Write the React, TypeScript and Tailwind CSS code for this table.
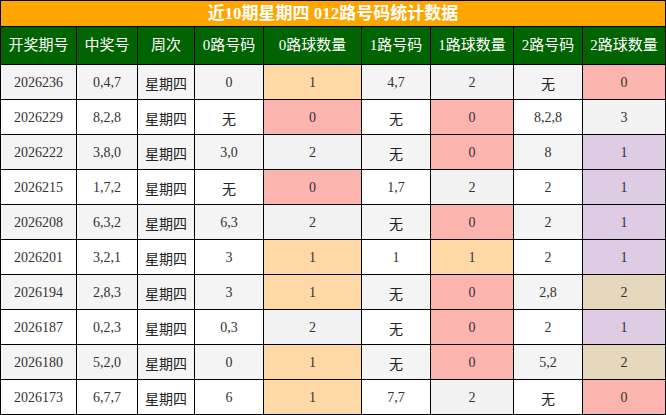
import React from "react";

type Cell = { t: string; c?: string };

const P = "bg-[#fbb4ae]";
const O = "bg-[#fed9a6]";
const G = "bg-[#f2f2f2]";
const L = "bg-[#decbe4]";
const T = "bg-[#e5d8bd]";

const rows: { id: string; win: string; z: string; zc: string; zcBg: string; o: string; oc: string; ocBg: string; t: string; tc: string; tcBg: string }[] = [
  { id: "2026236", win: "0,4,7", z: "0", zc: "1", zcBg: O, o: "4,7", oc: "2", ocBg: G, t: "无", tc: "0", tcBg: P },
  { id: "2026229", win: "8,2,8", z: "无", zc: "0", zcBg: P, o: "无", oc: "0", ocBg: P, t: "8,2,8", tc: "3", tcBg: G },
  { id: "2026222", win: "3,8,0", z: "3,0", zc: "2", zcBg: G, o: "无", oc: "0", ocBg: P, t: "8", tc: "1", tcBg: L },
  { id: "2026215", win: "1,7,2", z: "无", zc: "0", zcBg: P, o: "1,7", oc: "2", ocBg: G, t: "2", tc: "1", tcBg: L },
  { id: "2026208", win: "6,3,2", z: "6,3", zc: "2", zcBg: G, o: "无", oc: "0", ocBg: P, t: "2", tc: "1", tcBg: L },
  { id: "2026201", win: "3,2,1", z: "3", zc: "1", zcBg: O, o: "1", oc: "1", ocBg: O, t: "2", tc: "1", tcBg: L },
  { id: "2026194", win: "2,8,3", z: "3", zc: "1", zcBg: O, o: "无", oc: "0", ocBg: P, t: "2,8", tc: "2", tcBg: T },
  { id: "2026187", win: "0,2,3", z: "0,3", zc: "2", zcBg: G, o: "无", oc: "0", ocBg: P, t: "2", tc: "1", tcBg: L },
  { id: "2026180", win: "5,2,0", z: "0", zc: "1", zcBg: O, o: "无", oc: "0", ocBg: P, t: "5,2", tc: "2", tcBg: T },
  { id: "2026173", win: "6,7,7", z: "6", zc: "1", zcBg: O, o: "7,7", oc: "2", ocBg: G, t: "无", tc: "0", tcBg: P },
];

const headers = ["开奖期号", "中奖号", "周次", "0路号码", "0路球数量", "1路号码", "1路球数量", "2路号码", "2路球数量"];

const isCjk = (s: string) => /[\u4e00-\u9fff]/.test(s);

export default function App() {
  return (
    <div
      className="w-[666px] h-[415px] bg-black p-px grid gap-px grid-cols-[75px_60px_56px_68px_97px_68px_82px_68px_82px] grid-rows-[25px_37px_repeat(10,34px)]"
      style={{ fontFamily: '"Liberation Serif", "Noto Sans CJK SC", serif' }}
    >
      <div className="col-span-9 bg-[#ffa500] text-white font-bold text-[17px] flex items-center justify-center leading-none">
        近10期星期四 012路号码统计数据
      </div>
      {headers.map((h) => (
        <div key={h} className="bg-[#006400] text-white text-[15px] flex items-center justify-center">
          {h}
        </div>
      ))}
      {rows.map((r, i) => {
        const rowBg = i % 2 === 0 ? "bg-[#f4f4f4]" : "bg-white";
        const cells: Cell[] = [
          { t: r.id, c: rowBg },
          { t: r.win, c: rowBg },
          { t: "星期四", c: rowBg },
          { t: r.z, c: rowBg },
          { t: r.zc, c: r.zcBg },
          { t: r.o, c: rowBg },
          { t: r.oc, c: r.ocBg },
          { t: r.t, c: rowBg },
          { t: r.tc, c: r.tcBg },
        ];
        return cells.map((c, j) => (
          <div
            key={`${i}-${j}`}
            className={`${c.c} flex items-center justify-center ${isCjk(c.t) ? "text-[14px] text-[#222] pt-[5px]" : "text-[14px] text-[#333]"}`}
          >
            {c.t}
          </div>
        ));
      })}
    </div>
  );
}
